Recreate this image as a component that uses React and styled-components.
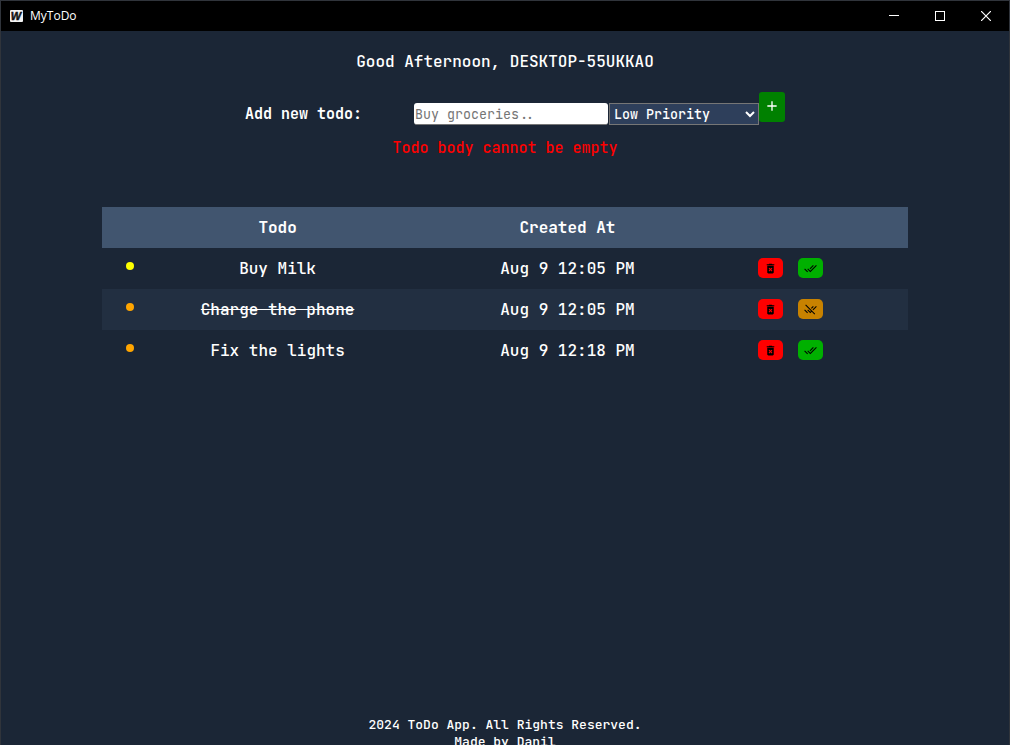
import React from "react";
import styled, { createGlobalStyle } from "styled-components";
import { MdAdd, MdDeleteForever, MdDoneAll, MdRemoveDone } from "react-icons/md";

const mono = '"JetBrains Mono", "DejaVu Sans Mono", "Liberation Mono", monospace';

const GlobalStyle = createGlobalStyle`
  * { box-sizing: border-box; }
  body { margin: 0; background: #1b2636; color: #fff; font-family: ${mono}; font-size: 16px; font-weight: 500; }
`;

const Window = styled.div`
  display: flex;
  flex-direction: column;
  height: 100vh;
  overflow: hidden;
  border: 1px solid #30343b;
  border-bottom: 0;
`;

const TitleBar = styled.header`
  display: flex;
  flex: 0 0 30px;
  align-items: center;
  gap: 7px;
  padding-left: 9px;
  background: #000;
`;

const AppName = styled.span`
  flex: 1;
  font: 12px/16px "Segoe UI", "Open Sans", "Noto Sans", sans-serif;
`;

const Caption = styled.button`
  display: grid;
  place-items: center;
  width: 46px;
  height: 29px;
  padding: 0;
  border: 0;
  background: transparent;
  color: #fff;
`;

const CaptionGroup = styled.div`
  display: flex;
`;

const Main = styled.main`
  display: flex;
  flex: 1;
  flex-direction: column;
  align-items: center;
  min-height: 0;
  padding-top: 20px;
`;

const Greeting = styled.p`
  margin: 0 0 20px;
  line-height: 21px;
`;

const Form = styled.form`
  display: flex;
  align-items: flex-end;
  height: 33px;
`;

const Label = styled.label`
  width: 189px;
  padding-left: 20px;
  font-size: 15px;
  font-weight: bold;
  line-height: 22px;
`;

const TextBox = styled.input`
  width: 194px;
  height: 22px;
  margin-right: 1px;
  padding: 0 1px;
  border: 0;
  border-bottom: 1px solid #767676;
  border-radius: 3px;
  background: #fff;
  color: #222;
  font-family: ${mono};
  &::placeholder { color: #757575; }
`;

const Priority = styled.select`
  width: 150px;
  height: 22px;
  padding: 0;
  border: 1px solid #767676;
  border-radius: 0;
  background-color: #2e3f5b;
  color: #fff;
  font-family: ${mono};
  font-weight: 500;
`;

const AddButton = styled.button`
  display: flex;
  align-self: flex-start;
  justify-content: center;
  width: 26px;
  height: 30px;
  padding: 6px 0;
  border: 0;
  border-radius: 3px;
  background: #008000;
  color: #fff;
`;

const ErrorText = styled.p`
  margin: 12px 0 48px;
  color: #f00;
  font-size: 15px;
  line-height: 22px;
`;

const Table = styled.table`
  width: 80%;
  table-layout: fixed;
  border-collapse: collapse;
  line-height: 21px;
  text-align: center;
`;

const HeadRow = styled.tr`
  background: #41556f;
`;

const Row = styled.tr`
  &:nth-child(even) { background: #222f41; }
`;

const HeadCell = styled.th`
  width: ${(p) => p.$width};
  padding: 10px 0;
`;

const Cell = styled.td`
  padding: 10px 0;
  text-decoration: ${(p) => (p.$done ? "line-through" : "none")};
`;

const Dot = styled.span`
  display: block;
  width: 8px;
  height: 8px;
  margin: 0 auto 5px;
  border-radius: 50%;
  background: ${(p) => p.$color};
`;

const Actions = styled.div`
  display: flex;
  gap: 15px;
  padding: 0 0 1px 20px;
`;

const ActionButton = styled.button`
  display: grid;
  place-items: center;
  width: 25px;
  height: 20px;
  padding: 0;
  border: 0;
  border-radius: 5px;
  background: ${(p) => p.$color};
  color: #000;
`;

const Footer = styled.footer`
  flex: 0 0 29px;
  min-height: 0;
  font-size: 13px;
  line-height: 17px;
  text-align: center;
`;

const todos = [
  { body: "Buy Milk", created: "Aug 9 12:05 PM", dot: "#ff0", done: false },
  { body: "Charge the phone", created: "Aug 9 12:05 PM", dot: "orange", done: true },
  { body: "Fix the lights", created: "Aug 9 12:18 PM", dot: "orange", done: false },
];

function Logo() {
  return (
    <svg width="13" height="13" viewBox="0 0 13 13" aria-hidden="true">
      <rect width="13" height="12" y="0" rx="1" fill="#f4f4f4" />
      <text x="6" y="10" textAnchor="middle" fontFamily="Liberation Sans, sans-serif" fontSize="11" fontWeight="bold" fontStyle="italic" fill="#111" stroke="#111" strokeWidth="0.5">W</text>
    </svg>
  );
}

export default function App() {
  return (
    <Window>
      <GlobalStyle />
      <TitleBar>
        <Logo />
        <AppName>MyToDo</AppName>
        <CaptionGroup>
          <Caption aria-label="Minimize">
            <svg width="10" height="10"><path d="M0 4.5h10" stroke="currentColor" /></svg>
          </Caption>
          <Caption aria-label="Maximize">
            <svg width="10" height="10"><rect x=".5" y=".5" width="9" height="9" fill="none" stroke="currentColor" /></svg>
          </Caption>
          <Caption aria-label="Close">
            <svg width="10" height="10"><path d="M0 0l10 10M10 0L0 10" stroke="currentColor" strokeWidth="1.2" /></svg>
          </Caption>
        </CaptionGroup>
      </TitleBar>
      <Main>
        <Greeting>Good Afternoon, DESKTOP-55UKKAO</Greeting>
        <Form onSubmit={(e) => e.preventDefault()}>
          <Label htmlFor="todo">Add new todo:</Label>
          <TextBox id="todo" type="text" placeholder="Buy groceries.." />
          <Priority aria-label="Priority" defaultValue="low">
            <option value="low">Low Priority</option>
            <option value="medium">Medium Priority</option>
            <option value="high">High Priority</option>
          </Priority>
          <AddButton type="submit" aria-label="Add todo"><MdAdd size={16} /></AddButton>
        </Form>
        <ErrorText role="alert">Todo body cannot be empty</ErrorText>
        <Table>
          <thead>
            <HeadRow>
              <HeadCell $width="7%" />
              <HeadCell $width="29.6%">Todo</HeadCell>
              <HeadCell $width="42.3%">Created At</HeadCell>
              <HeadCell />
            </HeadRow>
          </thead>
          <tbody>
            {todos.map((todo) => (
              <Row key={todo.body}>
                <Cell><Dot $color={todo.dot} /></Cell>
                <Cell $done={todo.done}>{todo.body}</Cell>
                <Cell>{todo.created}</Cell>
                <Cell>
                  <Actions>
                    <ActionButton $color="#f00" aria-label="Delete"><MdDeleteForever size={13} /></ActionButton>
                    <ActionButton $color={todo.done ? "#c88200" : "#00b000"} aria-label={todo.done ? "Mark as not done" : "Mark as done"}>
                      {todo.done ? <MdRemoveDone size={13} /> : <MdDoneAll size={13} />}
                    </ActionButton>
                  </Actions>
                </Cell>
              </Row>
            ))}
          </tbody>
        </Table>
      </Main>
      <Footer>
        2024 ToDo App. All Rights Reserved.
        <br />
        Made by Danil
      </Footer>
    </Window>
  );
}
